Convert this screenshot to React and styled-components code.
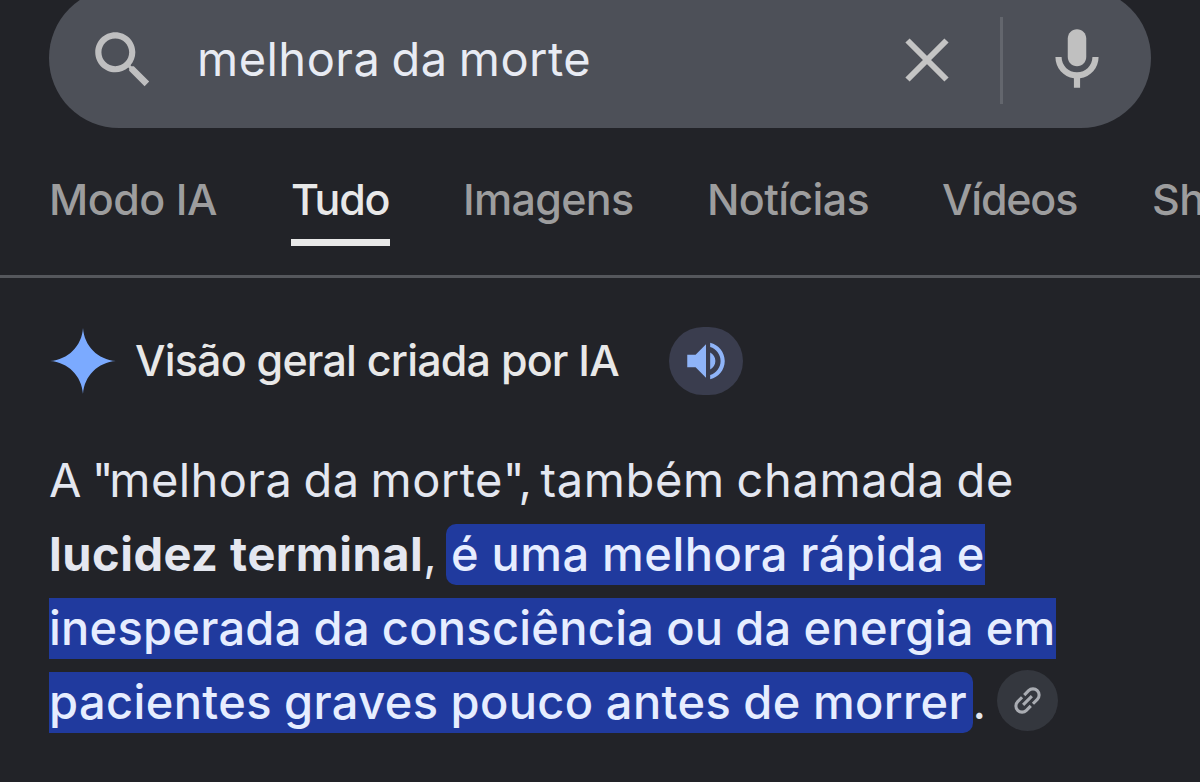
import styled, { createGlobalStyle } from "styled-components";

const TABS = [
    { label: "Modo IA", width: 169, track: -0.5 },
    { label: "Tudo", width: 99, track: -1.3, active: true },
    { label: "Imagens", width: 171, track: -0.7 },
    { label: "Notícias", width: 162, track: -0.65 },
    { label: "Vídeos", width: 137, track: -1.2 },
    { label: "Sh", width: 48, track: -0.5 },
];

const SearchBar = () => (
    <Bar>
        <SearchIcon viewBox="0 0 24 24">
            <path d="M15.5 14h-.79l-.28-.27C15.41 12.59 16 11.11 16 9.5 16 5.91 13.09 3 9.5 3S3 5.91 3 9.5 5.91 16 9.5 16c1.61 0 3.09-.59 4.23-1.57l.27.28v.79l5 4.99L20.49 19l-4.99-5zm-6 0C7.01 14 5 11.99 5 9.5S7.01 5 9.5 5 14 7.01 14 9.5 11.99 14 9.5 14z" />
        </SearchIcon>
        <Query>melhora da morte</Query>
        <ClearIcon viewBox="0 0 44 44">
            <path d="M2.5 2.5L41.5 41.5M41.5 2.5L2.5 41.5" />
        </ClearIcon>
        <Divider />
        <MicIcon viewBox="0 0 24 24">
            <path d="M12 14c1.66 0 3-1.34 3-3V5c0-1.66-1.34-3-3-3S9 3.34 9 5v6c0 1.66 1.34 3 3 3z" />
            <path d="M17 11c0 2.76-2.24 5-5 5s-5-2.24-5-5H5c0 3.53 2.61 6.43 6 6.92V21h2v-3.08c3.39-.49 6-3.39 6-6.92h-2z" />
        </MicIcon>
    </Bar>
);

const Tabs = () => (
    <TabList>
        {TABS.map((tab) => (
            <Tab key={tab.label} $width={tab.width} $track={tab.track} $active={tab.active}>
                {tab.label}
            </Tab>
        ))}
    </TabList>
);

const OverviewHeader = () => (
    <HeaderWrap>
        <Spark viewBox="0 0 66 66">
            <path d="M33 0C34.2 18 48 31.8 66 33C48 34.2 34.2 48 33 66C31.8 48 18 34.2 0 33C18 31.8 31.8 18 33 0Z" />
        </Spark>
        <HeaderTitle>Visão geral criada por IA</HeaderTitle>
        <SpeakButton>
            <svg viewBox="0 0 24 24">
                <path d="M3 9v6h4l5 5V4L7 9H3zm13.5 3c0-1.77-1.02-3.29-2.5-4.03v8.05c1.48-.73 2.5-2.25 2.5-4.02zM14 3.23v2.06c2.89.86 5 3.54 5 6.71s-2.11 5.85-5 6.71v2.06c4.01-.91 7-4.49 7-8.77s-2.99-7.86-7-8.77z" />
            </svg>
        </SpeakButton>
    </HeaderWrap>
);

const Answer = () => (
    <AnswerWrap>
        <Line>
            <Run $track={-4.4} $word={6}>{'A "'}</Run>
            <Run $track={0.42} $word={-2.5}>melhora da morte</Run>
            <Run $track={-2.4}>{'", '}</Run>
            <Run $track={0.65} $word={-2.2}>também chamada de</Run>
        </Line>
        <Line>
            <Strong>lucidez terminal</Strong>
            <Run $track={-2}>{", "}</Run>
            <Mark $track={0.45} $word={-0.5} $start>é uma melhora rápida e</Mark>
        </Line>
        <Line>
            <Mark $track={0.25} $word={-0.8}>inesperada da consciência ou da energia em</Mark>
        </Line>
        <Line>
            <Mark $track={0.37} $word={-0.7} $end>pacientes graves pouco antes de morrer</Mark>
            <Run $track={0}>.</Run>
            <LinkButton>
                <svg viewBox="0 0 24 24">
                    <path d="M11 8H7a4 4 0 0 0 0 8h4M13 8h4a4 4 0 0 1 0 8h-4M8 12h8" />
                </svg>
            </LinkButton>
        </Line>
    </AnswerWrap>
);

export default function App() {
    return (
        <>
            <GlobalStyle />
            <Page>
                <SearchBar />
                <Tabs />
                <OverviewHeader />
                <Answer />
            </Page>
        </>
    );
}

const GlobalStyle = createGlobalStyle`
    * {
        box-sizing: border-box;
    }

    body {
        margin: 0;
        background: #222328;
        overflow: hidden;
    }
`;

const Page = styled.main`
    display: flow-root;
    width: 1200px;
    height: 782px;
    overflow: hidden;
    background: #222328;
    font-family: Inter, "Liberation Sans", sans-serif;
`;

const Bar = styled.div`
    display: flex;
    align-items: center;
    width: 1102px;
    height: 140px;
    margin: -12px 0 0 49px;
    padding: 3px 37px 0 37px;
    border-radius: 70px;
    background: #4d5058;
`;

const SearchIcon = styled.svg`
    flex: none;
    width: 74px;
    height: 74px;
    margin-right: 37px;
    fill: #bfbfc0;
`;

const Query = styled.div`
    flex: 1;
    padding-bottom: 2px;
    font-size: 47px;
    line-height: 58px;
    letter-spacing: 0.47px;
    word-spacing: -2.5px;
    color: #e8ebf3;
`;

const ClearIcon = styled.svg`
    flex: none;
    width: 44px;
    height: 44px;
    stroke: #c4c4c4;
    stroke-width: 6;
`;

const Divider = styled.div`
    flex: none;
    width: 3px;
    height: 87px;
    margin: 1px 37px 0 51.5px;
    background: #63666d;
`;

const MicIcon = styled.svg`
    flex: none;
    width: 74px;
    height: 74px;
    fill: #c0c0c0;
`;

const TabList = styled.nav`
    display: flex;
    align-items: flex-start;
    gap: 73px;
    height: 150px;
    padding: 45px 0 0 49px;
    border-bottom: 3px solid #55575c;
    overflow: hidden;
`;

const Tab = styled.div`
    flex: none;
    width: ${({ $width }) => $width}px;
    height: 73px;
    border-bottom: 7px solid ${({ $active }) => ($active ? "#e8e8e8" : "transparent")};
    font-size: 43px;
    font-weight: 500;
    line-height: 53px;
    letter-spacing: ${({ $track }) => $track}px;
    white-space: nowrap;
    color: ${({ $active }) => ($active ? "#e8e8e8" : "#9d9d9e")};
`;

const HeaderWrap = styled.div`
    display: flex;
    align-items: center;
    margin-top: 49px;
    padding-left: 50px;
`;

const Spark = styled.svg`
    flex: none;
    width: 66px;
    height: 66px;
    fill: #7baaff;
`;

const HeaderTitle = styled.h1`
    width: 533px;
    margin: 0;
    padding: 0 0 3px 19px;
    font-size: 43px;
    font-weight: 500;
    line-height: 52px;
    letter-spacing: -0.8px;
    white-space: nowrap;
    color: #e8e8e8;
`;

const SpeakButton = styled.div`
    display: flex;
    align-items: center;
    justify-content: center;
    width: 74px;
    height: 68px;
    margin-left: 20px;
    border-radius: 34px;
    background: #3a3d4e;

    svg {
        width: 50px;
        height: 50px;
        fill: #8fb4f8;
    }
`;

const AnswerWrap = styled.div`
    margin: 48px 0 0 49px;
`;

const Line = styled.div`
    display: flex;
    align-items: center;
    height: 74px;
    font-size: 47px;
    line-height: 59px;
    white-space: pre;
    color: #e4e7f0;
`;

const Run = styled.span`
    padding-bottom: 2px;
    letter-spacing: ${({ $track }) => $track}px;
    word-spacing: ${({ $word = 0 }) => $word}px;
`;

const Strong = styled.strong`
    padding-bottom: 2px;
    font-weight: 700;
    letter-spacing: 0.5px;
`;

const Mark = styled.mark`
    padding: 0 ${({ $end }) => ($end ? 5.5 : 0)}px 2px ${({ $start }) => ($start ? 5 : 0)}px;
    border-radius: ${({ $start, $end }) => ($start ? "10px 0 0 10px" : $end ? "0 10px 10px 0" : 0)};
    background: #203a9e;
    font-weight: 500;
    letter-spacing: ${({ $track }) => $track}px;
    word-spacing: ${({ $word = 0 }) => $word}px;
    color: #e6edff;
`;

const LinkButton = styled.div`
    display: flex;
    align-items: center;
    justify-content: center;
    width: 61px;
    height: 61px;
    margin: 0 0 3px 10.5px;
    border-radius: 50%;
    background: #34373e;

    svg {
        width: 37px;
        height: 37px;
        fill: none;
        stroke: #a9acb2;
        stroke-width: 2;
        transform: rotate(-45deg);
    }
`;
